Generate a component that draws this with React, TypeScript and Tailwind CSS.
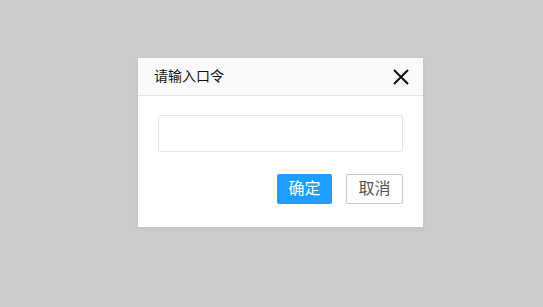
import React, { useState } from 'react';

const font = { fontFamily: '"Liberation Sans", "Noto Sans CJK SC", sans-serif' };

export default function App() {
  const [code, setCode] = useState('');

  return (
    <div className="h-screen w-full bg-[#cccccc] pt-[58px] pl-[138px]" style={font}>
      <div className="w-[285px] bg-white shadow-[0_1px_4px_rgba(0,0,0,0.06)]">
        {/* title bar */}
        <div className="flex h-[38px] items-center justify-between border-b border-[#e5e5e5] bg-[#fafafa] pl-4 pr-[14px]">
          <span className="text-[14px] text-[#111]">请输入口令</span>
          <button className="flex h-4 w-4 items-center justify-center" aria-label="关闭">
            <svg width="16" height="16" viewBox="0 0 16 16">
              <path d="M1 1 L15 15 M15 1 L1 15" stroke="#111" strokeWidth="2" fill="none" />
            </svg>
          </button>
        </div>

        {/* body */}
        <div className="px-5 pt-[19px] pb-[23px]">
          <input
            type="password"
            value={code}
            onChange={(e) => setCode(e.target.value)}
            className="block h-[37px] w-full rounded-[2px] border border-[#e6e6e6] px-2 text-[14px] outline-none"
          />
          <div className="mt-[22px] flex justify-end gap-[14px]">
            <button className="h-[30px] w-[55px] rounded-[2px] bg-[#1e9fff] text-[16px] text-white">
              确定
            </button>
            <button className="h-[30px] w-[57px] rounded-[2px] border border-[#c9c9c9] bg-white text-[16px] text-[#555]">
              取消
            </button>
          </div>
        </div>
      </div>
    </div>
  );
}
